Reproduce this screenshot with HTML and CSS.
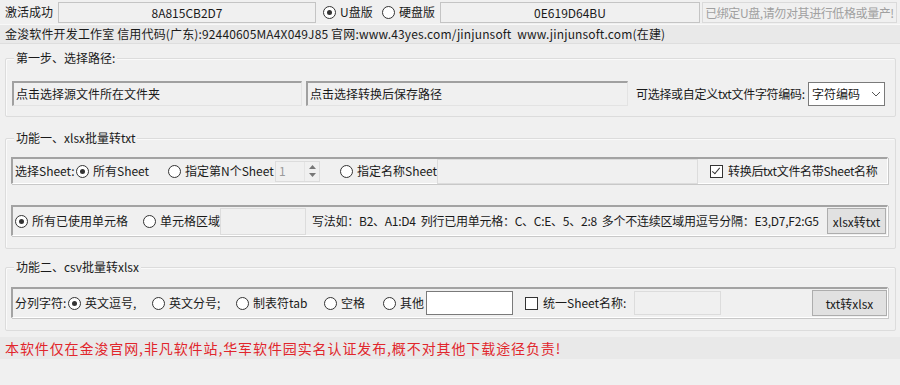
FILE: index.html
```html
<!DOCTYPE html>
<html lang="zh-CN">
<head>
    <meta charset="UTF-8">
    <title>金浚软件 xlsx/txt 批量转换</title>
    <link rel="stylesheet" href="styles.css">
</head>
<body>
    <!-- 激活信息 -->
    <div class="top-row">
        <span class="lbl">激活成功</span>
        <div class="field code1">8A815CB2D7</div>
        <label class="opt w-u"><span class="radio on"></span>U盘版</label>
        <label class="opt w-d"><span class="radio"></span>硬盘版</label>
        <div class="field code2">0E619D64BU</div>
        <div class="field note">已绑定U盘,请勿对其进行低格或量产!</div>
    </div>
    <div class="info">金浚软件开发工作室 信用代码(广东):92440605MA4X049J85 官网:www.43yes.com/jinjunsoft&nbsp; www.jinjunsoft.com(在建)</div>

    <div class="group g1">
        <div class="title">第一步、选择路径:</div>
        <div class="path-row">
            <div class="path src">点击选择源文件所在文件夹</div>
            <div class="path dst">点击选择转换后保存路径</div>
            <span class="enc-lbl">可选择或自定义txt文件字符编码:</span>
            <div class="select">字符编码<span class="caret"><svg width="10" height="6" viewBox="0 0 10 6"><path d="M1 1l4 4 4-4" fill="none" stroke="#555" stroke-width="1"/></svg></span></div>
        </div>
    </div>

    <div class="group g2">
        <div class="title">功能一、xlsx批量转txt</div>
        <div class="panel p-sheet">
            <span class="txt w-sel">选择Sheet:</span>
            <label class="opt w-all"><span class="radio on"></span>所有Sheet</label>
            <label class="opt w-nth"><span class="radio"></span>指定第N个Sheet</label>
            <div class="spin">
                <span class="spin-val">1</span>
                <span class="spin-btn">
                    <svg width="7" height="4" viewBox="0 0 7 4"><path d="M0 4L3.5 0 7 4z" fill="#777"/></svg>
                    <svg width="7" height="4" viewBox="0 0 7 4"><path d="M0 0L3.5 4 7 0z" fill="#777"/></svg>
                </span>
            </div>
            <label class="opt w-name"><span class="radio"></span>指定名称Sheet</label>
            <div class="box sheet-name"></div>
            <label class="opt w-tail"><span class="check on"></span>转换后txt文件名带Sheet名称</label>
        </div>
        <div class="panel p-range">
            <label class="opt w-used"><span class="radio on"></span>所有已使用单元格</label>
            <label class="opt w-area"><span class="radio"></span>单元格区域</label>
            <div class="box range"></div>
            <span class="txt hint">写法如：B2、A1:D4&nbsp; 列行已用单元格：C、C:E、5、2:8&nbsp; 多个不连续区域用逗号分隔：E3,D7,F2:G5</span>
            <button class="btn b-xlsx">xlsx转txt</button>
        </div>
    </div>

    <div class="group g3">
        <div class="title">功能二、csv批量转xlsx</div>
        <div class="panel p-csv">
            <span class="txt w-sep">分列字符:</span>
            <label class="opt w-comma"><span class="radio on"></span>英文逗号,</label>
            <label class="opt w-semi"><span class="radio"></span>英文分号;</label>
            <label class="opt w-tab"><span class="radio"></span>制表符tab</label>
            <label class="opt w-space"><span class="radio"></span>空格</label>
            <label class="opt w-other"><span class="radio"></span>其他</label>
            <div class="box white other"></div>
            <label class="opt w-uni"><span class="check"></span>统一Sheet名称:</label>
            <div class="box sheet-all"></div>
            <button class="btn b-csv">txt转xlsx</button>
        </div>
    </div>

    <div class="warn">本软件仅在金浚官网,非凡软件站,华军软件园实名认证发布,概不对其他下载途径负责!</div>
</body>
</html>
```

FILE: styles.css
```css
body {
    margin: 0;
    width: 900px;
    height: 385px;
    overflow: hidden;
    background-color: #f0f0f0;
    color: #1a1a1a;
    font-family: "Noto Sans CJK SC", "Microsoft YaHei", sans-serif;
    font-size: 12px;
    line-height: 16px;
}
.top-row {
    display: flex;
    align-items: center;
    height: 24px;
    padding-left: 5px;
}
.top-row > *, .path-row > *, .panel > * {
    flex: none;
    white-space: nowrap;
}
.lbl {
    width: 53px;
}
.field {
    height: 19px;
    line-height: 19px;
    border: 1px solid #c4c4c4;
    background-color: #f0f0f0;
    text-align: center;
    overflow: hidden;
}
.code1 {
    width: 256px;
}
.code2 {
    width: 258px;
}
.note {
    width: 193px;
    margin-left: 2px;
    color: #a0a0a0;
    border-color: #dadada;
    letter-spacing: -0.4px;
}
.opt {
    display: flex;
    align-items: center;
    white-space: nowrap;
}
.w-u {
    margin-left: 7px;
    width: 59px;
}
.w-d {
    width: 58px;
}
.radio {
    width: 11px;
    height: 11px;
    border: 1px solid #333;
    border-radius: 50%;
    background-color: #fff;
    margin-right: 4px;
    display: flex;
    align-items: center;
    justify-content: center;
    flex: none;
}
.radio.on::after {
    content: "";
    width: 5px;
    height: 5px;
    border-radius: 50%;
    background-color: #333;
}
.check {
    width: 11px;
    height: 11px;
    border: 1px solid #333;
    background-color: #fff;
    margin-right: 5px;
    position: relative;
    flex: none;
}
.check.on::after {
    content: "";
    position: absolute;
    left: 3px;
    top: 0px;
    width: 3px;
    height: 7px;
    border: solid #333;
    border-width: 0 1px 1px 0;
    transform: rotate(40deg);
}
.info {
    height: 18px;
    line-height: 18px;
    padding-left: 5px;
    background-color: #e9e9e9;
    border-top: 1px solid #f8f8f8;
    border-bottom: 1px solid #dedede;
    letter-spacing: 0.15px;
}

/* 分组框 */
.group {
    margin: 0 4px 0 5px;
    padding: 0 7px 12px 5px;
    border: 1px solid #dcdcdc;
    border-radius: 2px;
    box-shadow: inset 1px 1px 0 #fafafa;
}
.title {
    width: fit-content;
    height: 16px;
    line-height: 16px;
    margin: -9px 0 0 3px;
    padding: 0 2px;
    background-color: #f0f0f0;
}
.g1 {
    margin-top: 14px;
    padding-bottom: 10px;
}
.g2 {
    margin-top: 21px;
}
.g3 {
    margin-top: 18px;
}
.path-row {
    display: flex;
    align-items: center;
    margin-top: 15px;
    margin-left: 1px;
}
.path {
    height: 22px;
    line-height: 22px;
    padding-left: 2px;
    background-color: #f0f0f0;
    border-top: 2px solid #a0a0a0;
    border-left: 2px solid #a0a0a0;
    border-right: 1px solid #e3e3e3;
    border-bottom: 1px solid #e3e3e3;
}
.src {
    width: 285px;
}
.dst {
    width: 317px;
    margin-left: 4px;
}
.enc-lbl {
    margin-left: 8px;
    width: 172px;
    letter-spacing: -0.3px;
}
.select {
    width: 72px;
    height: 22px;
    line-height: 22px;
    padding-left: 3px;
    background-color: #fff;
    border: 1px solid #7a7a7a;
    display: flex;
    justify-content: space-between;
    align-items: center;
}
.caret {
    width: 16px;
    display: flex;
    justify-content: center;
}
.panel {
    display: flex;
    align-items: center;
    border-top: 2px solid #a3a3a3;
    border-left: 2px solid #a3a3a3;
    border-right: 1px solid #fff;
    border-bottom: 1px solid #fff;
    box-shadow: 1px 1px 0 #c8c8c8;
    padding-left: 2px;
}
.p-sheet {
    height: 24px;
    margin-top: 11px;
}
.p-range {
    height: 28px;
    margin-top: 21px;
}
.p-csv {
    height: 28px;
    margin-top: 12px;
}
.w-sel { width: 61px; }
.w-all { width: 92px; }
.w-nth { width: 107px; }
.w-name { width: 97px; margin-left: 20px; }
.w-tail { margin-left: 12px; letter-spacing: -0.3px; }
.w-used { width: 128px; }
.w-area { width: 77px; }
.w-sep { width: 53px; }
.w-comma { width: 84px; }
.w-semi { width: 84px; }
.w-tab { width: 88px; }
.w-space { width: 59px; }
.w-other { width: 43px; }
.w-uni { width: 109px; margin-left: 12px; }
.spin {
    width: 43px;
    height: 19px;
    border: 1px solid #dcdcdc;
    display: flex;
    justify-content: space-between;
    align-items: center;
}
.spin-val {
    padding-left: 3px;
    color: #9a9a9a;
}
.spin-btn {
    width: 14px;
    height: 19px;
    display: flex;
    flex-direction: column;
    align-items: center;
    justify-content: space-evenly;
    border-left: 1px solid #e4e4e4;
}
.box {
    height: 23px;
    border: 1px solid #dcdcdc;
    background-color: #f0f0f0;
}
.white {
    background-color: #fff;
    border-color: #7a7a7a;
}
.sheet-name {
    width: 259px;
}
.range {
    width: 84px;
    height: 25px;
}
.hint {
    margin-left: 6px;
    width: 509px;
    letter-spacing: -0.25px;
}
.btn {
    font-family: inherit;
    font-size: 12px;
    color: #1a1a1a;
    background-color: #e1e1e1;
    border: 1px solid #adadad;
    padding: 0;
}
.b-xlsx {
    width: 59px;
    height: 26px;
    margin-left: 6px;
}
.other {
    width: 85px;
    height: 22px;
}
.sheet-all {
    width: 85px;
    height: 22px;
}
.b-csv {
    width: 75px;
    height: 26px;
    margin-left: 91px;
}
.warn {
    margin-top: 6px;
    height: 22px;
    line-height: 22px;
    padding-left: 5px;
    background-color: #e9e9e9;
    color: #e1262c;
    font-size: 14px;
    letter-spacing: 0.9px;
}
```
